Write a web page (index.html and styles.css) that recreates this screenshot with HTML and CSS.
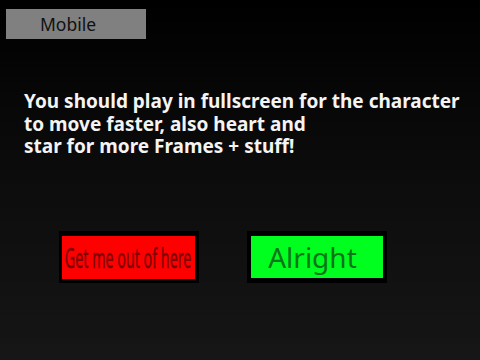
FILE: index.html
```html
<!DOCTYPE html>
<html>
<head>
<meta charset="utf-8">
<link rel="stylesheet" href="styles.css">
</head>
<body>
<div class="stage">
  <div class="topbar">
    <div class="mobile">Mobile</div>
  </div>
  <div class="message">
    <div class="line">You should play in fullscreen for the character</div>
    <div class="line">to move faster, also heart and</div>
    <div class="line">star for more Frames + stuff!</div>
  </div>
  <div class="buttons">
    <div class="btn btn-red"><span class="squeeze">Get me out of here</span></div>
    <div class="btn btn-green"><span class="ok">Alright</span></div>
  </div>
</div>
</body>
</html>
```
FILE: styles.css
```css
html, body {
  margin: 0;
  padding: 0;
}
body {
  width: 480px;
  height: 360px;
  overflow: hidden;
  background: linear-gradient(to bottom, #000000 0%, #0a0a0a 40%, #161616 100%);
  font-family: "Noto Sans", "Open Sans", sans-serif;
}
.stage {
  width: 480px;
  height: 360px;
  display: flex;
  flex-direction: column;
}
.topbar {
  padding: 9px 0 0 6px;
  display: flex;
}
.mobile {
  width: 140px;
  height: 30px;
  box-sizing: border-box;
  background: #808080;
  color: #111111;
  font-size: 17.5px;
  line-height: 30px;
  padding-left: 34px;
}
.message {
  margin: 51px 0 0 24px;
  color: #f4f4f4;
  font-weight: bold;
  font-size: 19px;
  white-space: nowrap;
}
.line {
  height: 22.5px;
  line-height: 22.5px;
}
.buttons {
  margin-top: 73px;
  padding-left: 59px;
  display: flex;
  gap: 48px;
}
.btn {
  width: 140px;
  height: 52px;
  box-sizing: border-box;
  border-style: solid;
  border-color: #000;
  display: flex;
  align-items: center;
  justify-content: center;
  overflow: hidden;
}
.btn-red {
  background: #ff0000;
  border-width: 5px 4px 4px 3px;
}
.btn-green {
  background: #00ff1e;
  border-width: 5px 4px 5px 4px;
}
.squeeze {
  display: inline-block;
  font-size: 28px;
  color: #7e0000;
  white-space: nowrap;
  transform: scaleX(0.51);
  -webkit-text-stroke: 0.4px #7e0000;
}
.ok {
  font-size: 28px;
  color: #08751a;
  margin-right: 9px;
}
```
